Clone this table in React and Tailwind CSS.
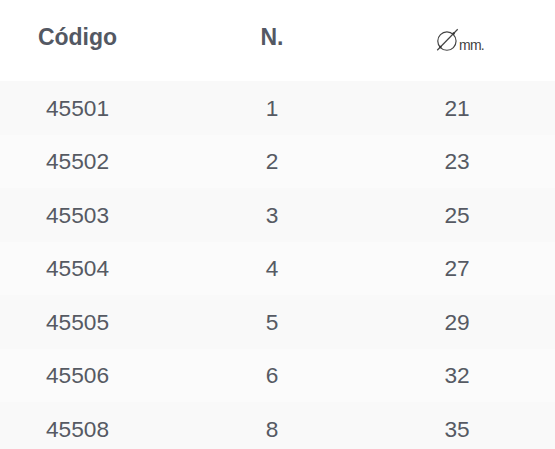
import React from 'react';

const rows = [
  ['45501', '1', '21'],
  ['45502', '2', '23'],
  ['45503', '3', '25'],
  ['45504', '4', '27'],
  ['45505', '5', '29'],
  ['45506', '6', '32'],
  ['45508', '8', '35'],
];

function DiameterMark() {
  return (
    <span className="inline-flex items-end">
      <svg width="28" height="26" viewBox="0 0 26 24" className="block">
        <circle cx="12" cy="13" r="8.5" fill="none" stroke="#444" strokeWidth="1.1" />
        <line x1="3" y1="21.5" x2="22" y2="2" stroke="#444" strokeWidth="1.1" />
        <circle cx="6" cy="18.5" r="1.1" fill="#333" />
        <circle cx="18.2" cy="6" r="1.1" fill="#333" />
      </svg>
      <span className="text-[14px] leading-none text-[#3f3f3f] -ml-[3px] mb-[1px] tracking-[-0.8px]">mm.</span>
    </span>
  );
}

export default function App() {
  return (
    <div className="w-[555px] h-[449px] overflow-hidden bg-white font-['Liberation_Sans',Arial,sans-serif] text-[22.7px] text-[#565a63]">
      <div className="grid grid-cols-[155px_234px_136px] h-[81px] items-center pb-[7px]">
        <div className="text-center font-bold text-[23px] text-[#535863]">Código</div>
        <div className="text-center font-bold text-[23px] text-[#535863]">N.</div>
        <div className="flex justify-center pl-[4px] pt-[6px]">
          <DiameterMark />
        </div>
      </div>
      {rows.map((r, i) => (
        <div
          key={r[0]}
          className={`grid grid-cols-[155px_234px_136px] h-[53.5px] items-center ${
            i % 2 === 0 ? 'bg-[#f9f9f9]' : 'bg-[#fbfbfb]'
          }`}
        >
          <div className="text-center">{r[0]}</div>
          <div className="text-center">{r[1]}</div>
          <div className="text-center">{r[2]}</div>
        </div>
      ))}
    </div>
  );
}
